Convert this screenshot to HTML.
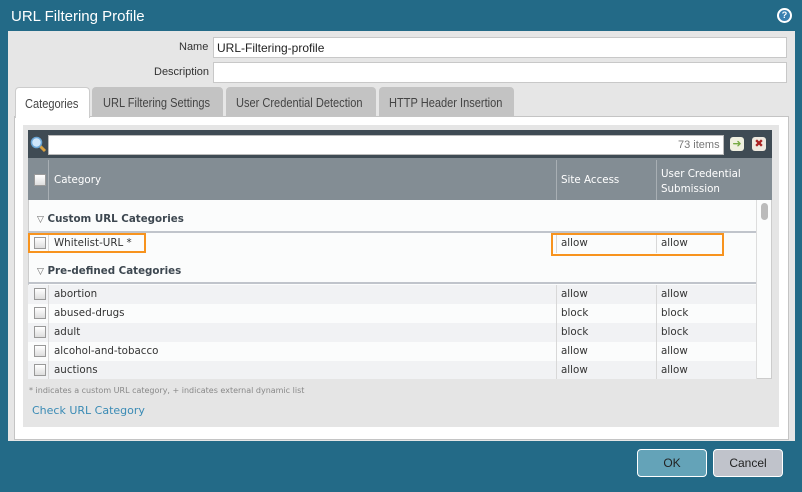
<!DOCTYPE html><html><head><style>
*{box-sizing:border-box;margin:0;padding:0}
body{width:802px;height:492px;background:#236a87;font-family:"DejaVu Sans","Liberation Sans",sans-serif;position:relative;overflow:hidden;font-size:10.3px;color:#333}
.a{position:absolute;white-space:nowrap}
.t{font-family:"Liberation Sans",sans-serif}
.n{font-family:"Liberation Sans",sans-serif}
.n span{display:inline-block;transform:scaleX(0.85);transform-origin:0 0}
.cb{position:absolute;width:12px;height:12px;border:1px solid #999;background:linear-gradient(#fff,#ddd)}
.row{position:absolute;left:28px;width:728px;height:19px}
.row span{position:absolute;top:3px}
.vl{position:absolute;top:0;bottom:0;width:1px;background:#d8d8d8}
</style></head><body>
<div class="a t" style="left:11px;top:8px;color:#fff;font-size:15px">URL Filtering Profile</div>
<div class="a" style="left:777px;top:8px;width:15px;height:15px;border-radius:50%;background:#fff;"></div>
<div class="a t" style="left:779px;top:10px;width:11px;height:11px;border-radius:50%;background:#3a7fb0;color:#fff;font-size:9px;font-weight:bold;text-align:center;line-height:11px">?</div>
<div class="a" style="left:8px;top:31px;width:787px;height:410px;background:#e6e6e6"></div>
<div class="a t" style="left:179px;top:41px;font-size:11px">Name</div>
<div class="a" style="left:213px;top:37px;width:574px;height:21px;background:#fff;border:1px solid #c8c8c8"></div>
<div class="a t" style="left:217px;top:41px;font-size:12px;color:#222">URL-Filtering-profile</div>
<div class="a t" style="left:154px;top:66px;font-size:11px">Description</div>
<div class="a" style="left:213px;top:62px;width:574px;height:21px;background:#fff;border:1px solid #c8c8c8"></div>
<div class="a" style="left:14px;top:116px;width:775px;height:324px;background:#fff;border:1px solid #c4c4c4"></div>
<div class="a n" style="left:15px;top:87px;width:75px;height:31px;background:#fff;border:1px solid #ccc;border-bottom:none;border-radius:4px 4px 0 0;font-size:13px;padding:8px 0 0 9px;color:#444"><span>Categories</span></div>
<div class="a n" style="left:92px;top:87px;width:131px;height:29px;background:#c3c3c3;border-radius:4px 4px 0 0;font-size:13px;padding:8px 0 0 11px;color:#444"><span>URL Filtering Settings</span></div>
<div class="a n" style="left:226px;top:87px;width:150px;height:29px;background:#c3c3c3;border-radius:4px 4px 0 0;font-size:13px;padding:8px 0 0 10px;color:#444"><span>User Credential Detection</span></div>
<div class="a n" style="left:379px;top:87px;width:135px;height:29px;background:#c3c3c3;border-radius:4px 4px 0 0;font-size:13px;padding:8px 0 0 10px;color:#444"><span>HTTP Header Insertion</span></div>
<div class="a" style="left:23px;top:125px;width:756px;height:302px;background:#e5e5e5"></div>
<div class="a" style="left:28px;top:130px;width:744px;height:28px;background:#3f4b54"></div>
<svg class="a" style="left:30px;top:136px" width="18" height="18"><line x1="9" y1="9" x2="15" y2="15" stroke="#d8a040" stroke-width="3"/><circle cx="6.5" cy="6.5" r="5" fill="#cfe6fa" stroke="#6aa6d6" stroke-width="1.5"/></svg>
<div class="a" style="left:48px;top:135px;width:676px;height:20px;background:#fff;border:1px solid #bbb"></div>
<div class="a t" style="left:678px;top:139px;font-size:11px;color:#777">73 items</div>
<div class="a" style="left:730px;top:137px;width:14px;height:14px;border-radius:3px;background:#f0f0e0;color:#7a4;font-weight:bold;font-size:11px;text-align:center;line-height:14px">➜</div>
<div class="a" style="left:752px;top:137px;width:14px;height:14px;border-radius:3px;background:#f0eae0;color:#a22;font-weight:bold;font-size:11px;text-align:center;line-height:14px">✖</div>
<div class="a" style="left:28px;top:158px;width:744px;height:42px;background:#838d94"></div>
<div class="a" style="left:48px;top:160px;width:1px;height:40px;background:#a8afb4"></div>
<div class="a" style="left:556px;top:160px;width:1px;height:40px;background:#a8afb4"></div>
<div class="a" style="left:656px;top:160px;width:1px;height:40px;background:#a8afb4"></div>
<div class="cb" style="left:34px;top:174px"></div>
<div class="a" style="left:54px;top:174px;color:#fff">Category</div>
<div class="a" style="left:561px;top:174px;color:#fff">Site Access</div>
<div class="a" style="left:661px;top:167px;color:#fff;line-height:15px">User Credential<br>Submission</div>
<div class="a" style="left:28px;top:200px;width:744px;height:179px;background:#fbfcfc;border:1px solid #ccc;border-top:none"></div>
<div class="a" style="left:756px;top:200px;width:1px;height:179px;background:#ddd"></div>
<div class="a" style="left:761px;top:203px;width:7px;height:17px;border-radius:4px;background:#bbb"></div>
<div class="a" style="left:37px;top:213px;font-weight:bold;color:#3d4750"><span style="font-size:9px;color:#666">▽</span> Custom URL Categories</div>
<div class="a" style="left:28px;top:231px;width:728px;height:2px;background:#c0c4cb"></div>
<div class="row" style="top:234px;background:#fbfcfc"><div class="vl" style="left:20px"></div><div class="vl" style="left:528px"></div><div class="vl" style="left:628px"></div><div class="cb" style="left:6px;top:3px"></div><span style="left:26px">Whitelist-URL *</span><span style="left:533px">allow</span><span style="left:633px">allow</span></div>
<div class="a" style="left:37px;top:265px;font-weight:bold;color:#3d4750"><span style="font-size:9px;color:#666">▽</span> Pre-defined Categories</div>
<div class="a" style="left:28px;top:282px;width:728px;height:2px;background:#c0c4cb"></div>
<div class="row" style="top:285px;background:#f1f2f4"><div class="vl" style="left:20px"></div><div class="vl" style="left:528px"></div><div class="vl" style="left:628px"></div><div class="cb" style="left:6px;top:3px"></div><span style="left:26px">abortion</span><span style="left:533px">allow</span><span style="left:633px">allow</span></div>
<div class="row" style="top:304px;background:#fbfcfc"><div class="vl" style="left:20px"></div><div class="vl" style="left:528px"></div><div class="vl" style="left:628px"></div><div class="cb" style="left:6px;top:3px"></div><span style="left:26px">abused-drugs</span><span style="left:533px">block</span><span style="left:633px">block</span></div>
<div class="row" style="top:323px;background:#f1f2f4"><div class="vl" style="left:20px"></div><div class="vl" style="left:528px"></div><div class="vl" style="left:628px"></div><div class="cb" style="left:6px;top:3px"></div><span style="left:26px">adult</span><span style="left:533px">block</span><span style="left:633px">block</span></div>
<div class="row" style="top:342px;background:#fbfcfc"><div class="vl" style="left:20px"></div><div class="vl" style="left:528px"></div><div class="vl" style="left:628px"></div><div class="cb" style="left:6px;top:3px"></div><span style="left:26px">alcohol-and-tobacco</span><span style="left:533px">allow</span><span style="left:633px">allow</span></div>
<div class="row" style="top:361px;background:#f1f2f4;height:18px"><div class="vl" style="left:20px"></div><div class="vl" style="left:528px"></div><div class="vl" style="left:628px"></div><div class="cb" style="left:6px;top:3px"></div><span style="left:26px">auctions</span><span style="left:533px">allow</span><span style="left:633px">allow</span></div>
<div class="a" style="left:28px;top:233px;width:118px;height:20px;border:2px solid #f7931e"></div>
<div class="a" style="left:551px;top:233px;width:173px;height:23px;border:2px solid #f7931e"></div>
<div class="a" style="left:29px;top:386px;font-size:8px;color:#888">* indicates a custom URL category, + indicates external dynamic list</div>
<div class="a" style="left:32px;top:404px;color:#3a8bb5;font-size:11px">Check URL Category</div>
<div class="a t" style="left:637px;top:449px;width:70px;height:28px;background:#64a3b8;border:1px solid #fff;border-radius:4px;text-align:center;line-height:26px;font-size:12px;color:#222">OK</div>
<div class="a t" style="left:713px;top:449px;width:70px;height:28px;background:#c0c3cb;border:1px solid #fff;border-radius:4px;text-align:center;line-height:26px;font-size:12px;color:#222">Cancel</div>
</body></html>
